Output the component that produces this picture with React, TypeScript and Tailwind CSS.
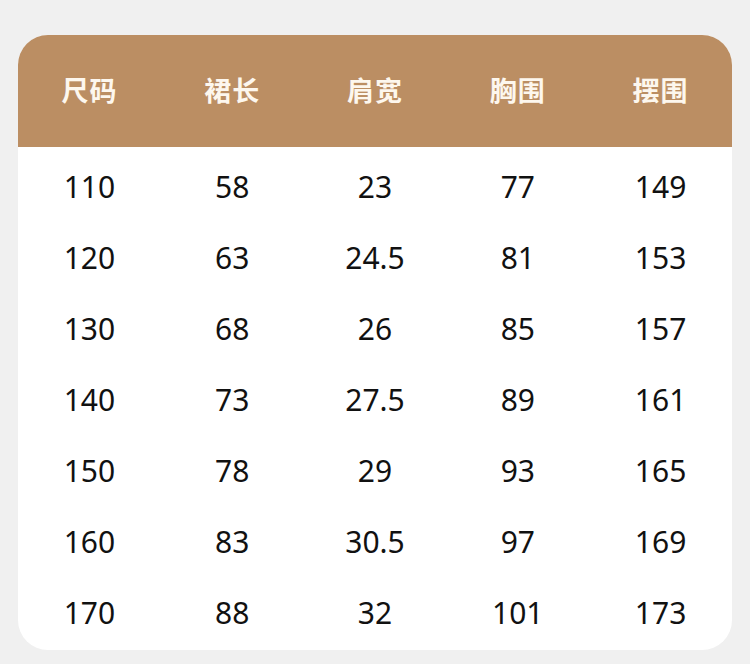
const headers = ['尺码', '裙长', '肩宽', '胸围', '摆围']

const rows = [
  ['110', '58', '23', '77', '149'],
  ['120', '63', '24.5', '81', '153'],
  ['130', '68', '26', '85', '157'],
  ['140', '73', '27.5', '89', '161'],
  ['150', '78', '29', '93', '165'],
  ['160', '83', '30.5', '97', '169'],
  ['170', '88', '32', '101', '173'],
]

export default function App() {
  return (
    <div className="w-[750px] h-[664px] bg-[#f0f0f0] pt-[35px] px-[18px] font-['Noto_Sans','Noto_Sans_CJK_SC',sans-serif]">
      <div className="rounded-[30px] overflow-hidden bg-white">
        <div className="grid grid-cols-5 h-[112px] items-center bg-[#bb8e63]">
          {headers.map(h => (
            <div key={h} className="text-center text-[27px] font-bold text-[#fdf7ee] tracking-[1px]">
              {h}
            </div>
          ))}
        </div>
        <div className="pt-[4px] pb-[2px]">
          {rows.map(r => (
            <div key={r[0]} className="grid grid-cols-5 h-[71px] items-center">
              {r.map((v, i) => (
                <div key={i} className="text-center text-[30px] text-[#111] leading-none">
                  {v}
                </div>
              ))}
            </div>
          ))}
        </div>
      </div>
    </div>
  )
}
